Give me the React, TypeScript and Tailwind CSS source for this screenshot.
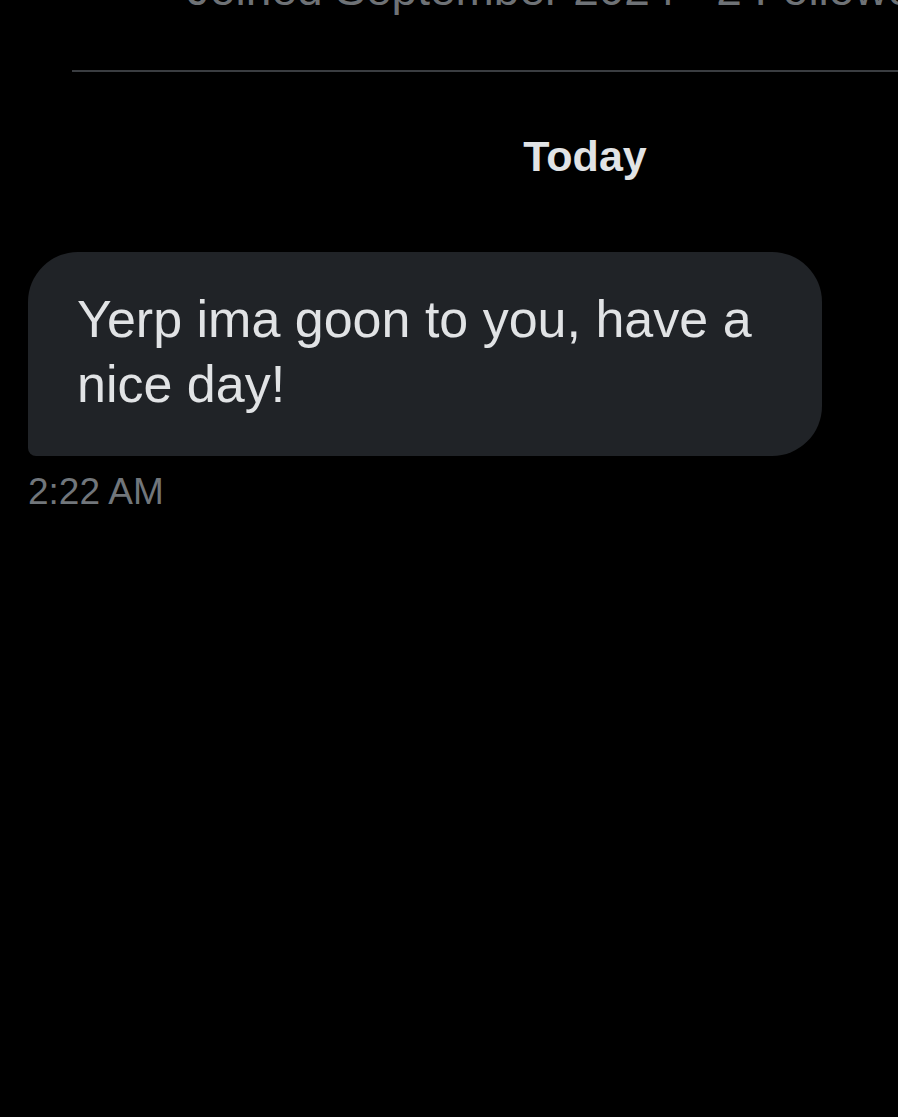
const font = { fontFamily: '"Liberation Sans", Arial, sans-serif' }

const App = () => {
  return (
    <div className="w-[898px] h-[1117px] bg-black overflow-hidden flex flex-col" style={font}>
      <div className="-mt-[34px] pl-[187px] text-[46px] leading-none text-[#6e7276] whitespace-nowrap">
        Joined September 2024 · 2 Followers
      </div>
      <div className="mt-[58px] ml-[72px] h-[2px] bg-[#3a3d41]" />
      <div className="mt-[63px] pl-[272px] flex justify-center">
        <span className="text-[43px] leading-none font-bold text-[#e1e3e5]">Today</span>
      </div>
      <div className="mt-[74px] ml-[28px] w-[794px] h-[204px] bg-[#202327] rounded-[50px] rounded-bl-[8px] pt-[35px] pl-[49px] pr-[48px]">
        <p className="text-[52px] leading-[65px] text-[#e1e3e5]">Yerp ima goon to you, have a nice day!</p>
      </div>
      <div className="mt-[17px] ml-[28px] text-[37px] leading-none text-[#71767b]">2:22 AM</div>
    </div>
  )
}

export default App
